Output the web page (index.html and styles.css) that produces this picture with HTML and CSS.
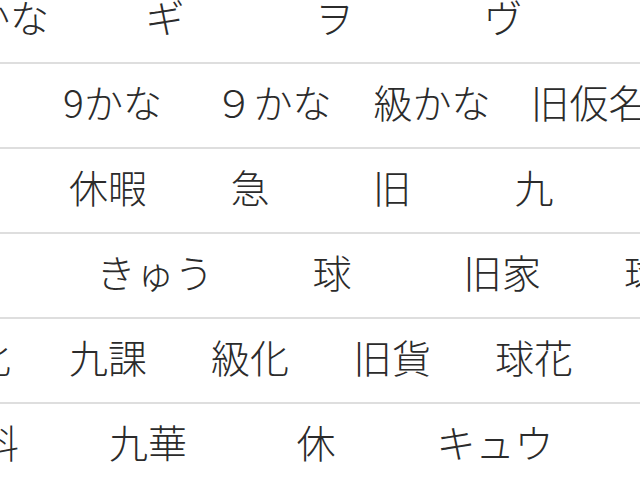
FILE: index.html
```html
<!DOCTYPE html>
<html lang="ja">
<head>
<meta charset="utf-8">
<link rel="stylesheet" href="styles.css">
</head>
<body>
<div class="list">
  <div class="row r0">
    <span class="cell">かな</span><span class="cell">ギ</span><span class="cell">ヲ</span><span class="cell">ヴ</span>
  </div>
  <div class="row r1">
    <span class="cell">9かな</span><span class="cell">９かな</span><span class="cell">級かな</span><span class="cell">旧仮名</span>
  </div>
  <div class="row r2">
    <span class="cell">休暇</span><span class="cell">急</span><span class="cell">旧</span><span class="cell">九</span>
  </div>
  <div class="row r3">
    <span class="cell">きゅう</span><span class="cell">球</span><span class="cell">旧家</span><span class="cell">球技</span>
  </div>
  <div class="row r4">
    <span class="cell">九化</span><span class="cell">九課</span><span class="cell">級化</span><span class="cell">旧貨</span><span class="cell">球花</span><span class="cell">急</span>
  </div>
  <div class="row r5">
    <span class="cell">給料</span><span class="cell">九華</span><span class="cell">休</span><span class="cell">キュウ</span>
  </div>
</div>
</body>
</html>
```

FILE: styles.css
```css
html, body {
  margin: 0;
  padding: 0;
  background: #ffffff;
  overflow: hidden;
}

body {
  width: 640px;
  height: 480px;
  font-family: "Noto Sans CJK JP", "Noto Sans", sans-serif;
  color: #2b2b2b;
}

.list {
  display: flex;
  flex-direction: column;
  margin-top: -21px;
}

.row {
  display: grid;
  grid-auto-flow: column;
  height: 83px;
  border-bottom: 2px solid #dedede;
  white-space: nowrap;
  overflow: hidden;
}

.cell {
  display: flex;
  align-items: center;
  justify-content: center;
  font-size: 39px;
  font-weight: 300;
  line-height: 1;
  padding-bottom: 8px;
}

.r0 { grid-template-columns: 140px 170px 168px 170px; margin-left: -60px; }
.r1 { grid-template-columns: 165px 156px 162px 152px; padding-left: 30px; }
.r2 { grid-template-columns: repeat(4, 142px); padding-left: 37px; }
.r3 { grid-template-columns: 184px 170px 170px 152px; padding-left: 63px; }
.r4 { grid-template-columns: 130px repeat(5, 142px); margin-left: -93px; }
.r5 { grid-template-columns: 168px 168px 168px 190px; margin-left: -104px; }
```
